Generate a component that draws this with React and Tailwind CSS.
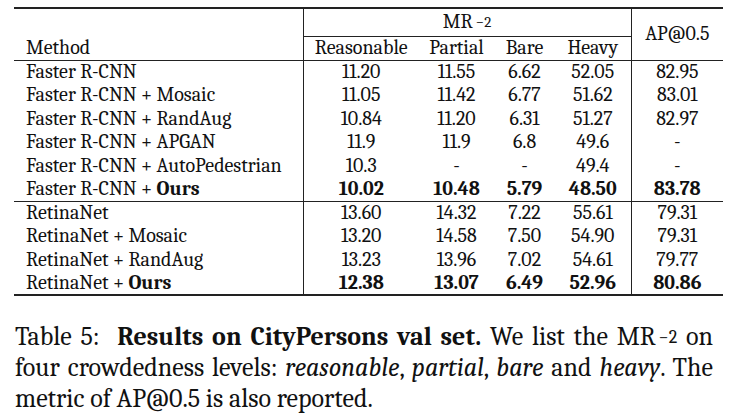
const fasterRows = [
  ["Faster R-CNN", "11.20", "11.55", "6.62", "52.05", "82.95"],
  ["Faster R-CNN + Mosaic", "11.05", "11.42", "6.77", "51.62", "83.01"],
  ["Faster R-CNN + RandAug", "10.84", "11.20", "6.31", "51.27", "82.97"],
  ["Faster R-CNN + APGAN", "11.9", "11.9", "6.8", "49.6", "-"],
  ["Faster R-CNN + AutoPedestrian", "10.3", "-", "-", "49.4", "-"],
];

const retinaRows = [
  ["RetinaNet", "13.60", "14.32", "7.22", "55.61", "79.31"],
  ["RetinaNet + Mosaic", "13.20", "14.58", "7.50", "54.90", "79.31"],
  ["RetinaNet + RandAug", "13.23", "13.96", "7.02", "54.61", "79.77"],
];

function Row({ cells }) {
  const [method, ...vals] = cells;
  return (
    <tr className="h-[23.5px]">
      <td className="pl-[12px] py-0 border-r border-[#222] leading-none">{method}</td>
      {vals.map((v, i) => (
        <td
          key={i}
          className={"text-center py-0 leading-none" + (i === 3 ? " border-r border-[#222]" : "")}
        >
          {v}
        </td>
      ))}
    </tr>
  );
}

function BoldRow({ base, vals, className }) {
  return (
    <tr className={"h-[23.5px] " + className}>
      <td className="pl-[12px] border-r border-[#222] leading-none">
        {base} + <b>Ours</b>
      </td>
      {vals.map((v, i) => (
        <td
          key={i}
          className={"text-center font-bold leading-none" + (i === 3 ? " border-r border-[#222]" : "")}
        >
          {v}
        </td>
      ))}
    </tr>
  );
}

export default function App() {
  return (
    <div className="w-[737px] h-[415px] bg-white text-[#111] font-serif overflow-hidden">
      <div className="pt-[7px] pl-[14px]">
        <table className="border-collapse text-[20px] w-[709px] table-fixed font-serif">
          <colgroup>
            <col className="w-[289px]" />
            <col className="w-[116px]" />
            <col className="w-[75px]" />
            <col className="w-[61px]" />
            <col className="w-[76px]" />
            <col className="w-[92px]" />
          </colgroup>
          <thead>
            <tr className="h-[28px] border-t-2 border-[#222]">
              <td className="border-r border-[#222]"></td>
              <td colSpan={4} className="text-center border-b border-[#222] border-r leading-none">
                MR<sup className="text-[15px] leading-none ml-[3px] relative -top-[1px]">−2</sup>
              </td>
              <td rowSpan={2} className="text-center leading-none">
                AP@0.5
              </td>
            </tr>
            <tr className="h-[24px] border-b border-[#222]">
              <td className="pl-[12px] border-r border-[#222] leading-none">Method</td>
              <td className="text-center leading-none">Reasonable</td>
              <td className="text-center leading-none">Partial</td>
              <td className="text-center leading-none">Bare</td>
              <td className="text-center leading-none border-r border-[#222]">Heavy</td>
            </tr>
          </thead>
          <tbody>
            {fasterRows.map((r) => (
              <Row key={r[0]} cells={r} />
            ))}
            <BoldRow
              base="Faster R-CNN"
              vals={["10.02", "10.48", "5.79", "48.50", "83.78"]}
              className="border-b border-[#222]"
            />
            {retinaRows.map((r) => (
              <Row key={r[0]} cells={r} />
            ))}
            <BoldRow
              base="RetinaNet"
              vals={["12.38", "13.07", "6.49", "52.96", "80.86"]}
              className="border-b-2 border-[#222]"
            />
          </tbody>
        </table>
      </div>
      <p className="mt-[26px] ml-[15px] w-[698px] text-[26px] leading-[31px] text-justify font-serif">
        Table 5:&nbsp; <b>Results on CityPersons val set.</b> We list the MR
        <sup className="text-[18px] leading-none ml-[3px] relative -top-[2px]">−2</sup> on four crowdedness levels:{" "}
        <i>reasonable</i>, <i>partial</i>, <i>bare</i> and <i>heavy</i>. The metric of AP@0.5 is also reported.
      </p>
    </div>
  );
}
